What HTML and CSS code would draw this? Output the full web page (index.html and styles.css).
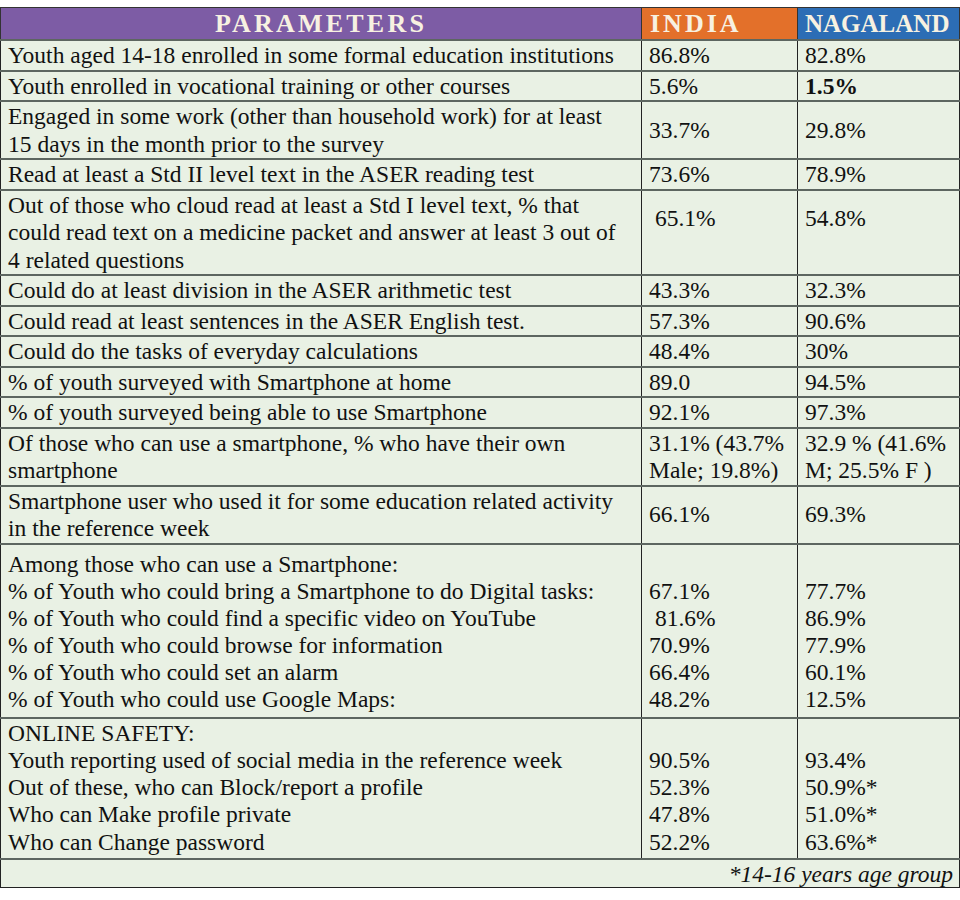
FILE: index.html
```html
<!DOCTYPE html>
<html>
<head>
<meta charset="utf-8">
<link rel="stylesheet" href="styles.css">
</head>
<body>
<table class="data">
  <colgroup>
    <col class="c-param">
    <col class="c-india">
    <col class="c-naga">
  </colgroup>
  <thead>
    <tr>
      <th class="h-param">PARAMETERS</th>
      <th class="h-india">INDIA</th>
      <th class="h-naga">NAGALAND</th>
    </tr>
  </thead>
  <tbody>
    <tr><td>Youth aged 14-18 enrolled in some formal education institutions</td><td>86.8%</td><td>82.8%</td></tr>
    <tr><td>Youth enrolled in vocational training or other courses</td><td>5.6%</td><td><b>1.5%</b></td></tr>
    <tr><td>Engaged in some work (other than household work) for at least<br>15 days in the month prior to the survey</td><td>33.7%</td><td>29.8%</td></tr>
    <tr><td>Read at least a Std II level text in the ASER reading test</td><td>73.6%</td><td>78.9%</td></tr>
    <tr class="tall"><td>Out of those who cloud read at least a Std I level text, % that<br>could read text on a medicine packet and answer at least 3 out of<br>4 related questions</td><td class="top">&nbsp;65.1%</td><td class="top">54.8%</td></tr>
    <tr><td>Could do at least division in the ASER arithmetic test</td><td>43.3%</td><td>32.3%</td></tr>
    <tr><td>Could read at least sentences in the ASER English test.</td><td>57.3%</td><td>90.6%</td></tr>
    <tr><td>Could do the tasks of everyday calculations</td><td>48.4%</td><td>30%</td></tr>
    <tr><td>% of youth surveyed with Smartphone at home</td><td>89.0</td><td>94.5%</td></tr>
    <tr><td>% of youth surveyed being able to use Smartphone</td><td>92.1%</td><td>97.3%</td></tr>
    <tr class="dark-top"><td>Of those who can use a smartphone, % who have their own<br>smartphone</td><td class="top">31.1% (43.7%<br>Male; 19.8%)</td><td class="top">32.9 % (41.6%<br>M; 25.5% F )</td></tr>
    <tr><td>Smartphone user who used it for some education related activity<br>in the reference week</td><td>66.1%</td><td>69.3%</td></tr>
    <tr class="group g1">
      <td>Among those who can use a Smartphone:<br>% of Youth who could bring a Smartphone to do Digital tasks:<br>% of Youth who could find a specific video on YouTube<br>% of Youth who could browse for information<br>% of Youth who could set an alarm<br>% of Youth who could use Google Maps:</td>
      <td><br>67.1%<br>&nbsp;81.6%<br>70.9%<br>66.4%<br>48.2%</td>
      <td><br>77.7%<br>86.9%<br>77.9%<br>60.1%<br>12.5%</td>
    </tr>
    <tr class="group g2">
      <td>ONLINE SAFETY:<br>Youth reporting used of social media in the reference week<br>Out of these, who can Block/report a profile<br>Who can Make profile private<br>Who can Change password</td>
      <td><br>90.5%<br>52.3%<br>47.8%<br>52.2%</td>
      <td><br>93.4%<br>50.9%*<br>51.0%*<br>63.6%*</td>
    </tr>
    <tr class="foot"><td colspan="3">*14-16 years age group</td></tr>
  </tbody>
</table>
</body>
</html>
```

FILE: styles.css
```css
html, body {
  margin: 0;
  padding: 0;
  background: #ffffff;
}
body {
  padding-top: 7px;
}
.data {
  border-collapse: collapse;
  width: 959px;
  table-layout: fixed;
  font-family: "Liberation Serif", "Times New Roman", serif;
  font-size: 23.5px;
  color: #111;
  background: #e9f1e4;
  border: 1px solid #222;
}
.c-param { width: 641px; }
.c-india { width: 156px; }
.c-naga { width: 162px; }

.data th {
  color: #f7f1e1;
  font-weight: bold;
  font-size: 26px;
  line-height: 30px;
  padding: 1px 8px 0;
  text-align: left;
  border: 1px solid #333;
  white-space: nowrap;
}
.h-param { background: #7d5ca5; text-align: center !important; letter-spacing: 3.2px; }
.h-india { background: #e3702a; letter-spacing: 3px; }
.h-naga { background: #2c6db5; font-size: 25px !important; letter-spacing: 0; padding-left: 7px !important; }

.data td {
  border-left: 1px solid #222;
  border-right: 1px solid #222;
  border-top: 2px solid #5d6660;
  border-bottom: 2px solid #5d6660;
  padding: 1px 4px 0 7px;
  line-height: 27.5px;
  vertical-align: middle;
  white-space: nowrap;
}
.data td + td { padding-left: 7px; }
.data td.top { vertical-align: top; }
.tall td.top { padding-top: 14px; }
.dark-top td { border-top-color: #1e2420; }
.data b { font-weight: bold; }
.group td { vertical-align: top; line-height: 27px; }
.g1 td { padding-top: 6px; padding-bottom: 4px; }
.g2 td { padding-top: 1px; padding-bottom: 2px; line-height: 27.3px; }
.foot td {
  text-align: right;
  font-style: italic;
  padding-right: 6px;
  border-bottom: 1px solid #222;
  line-height: 26px;
}
```
